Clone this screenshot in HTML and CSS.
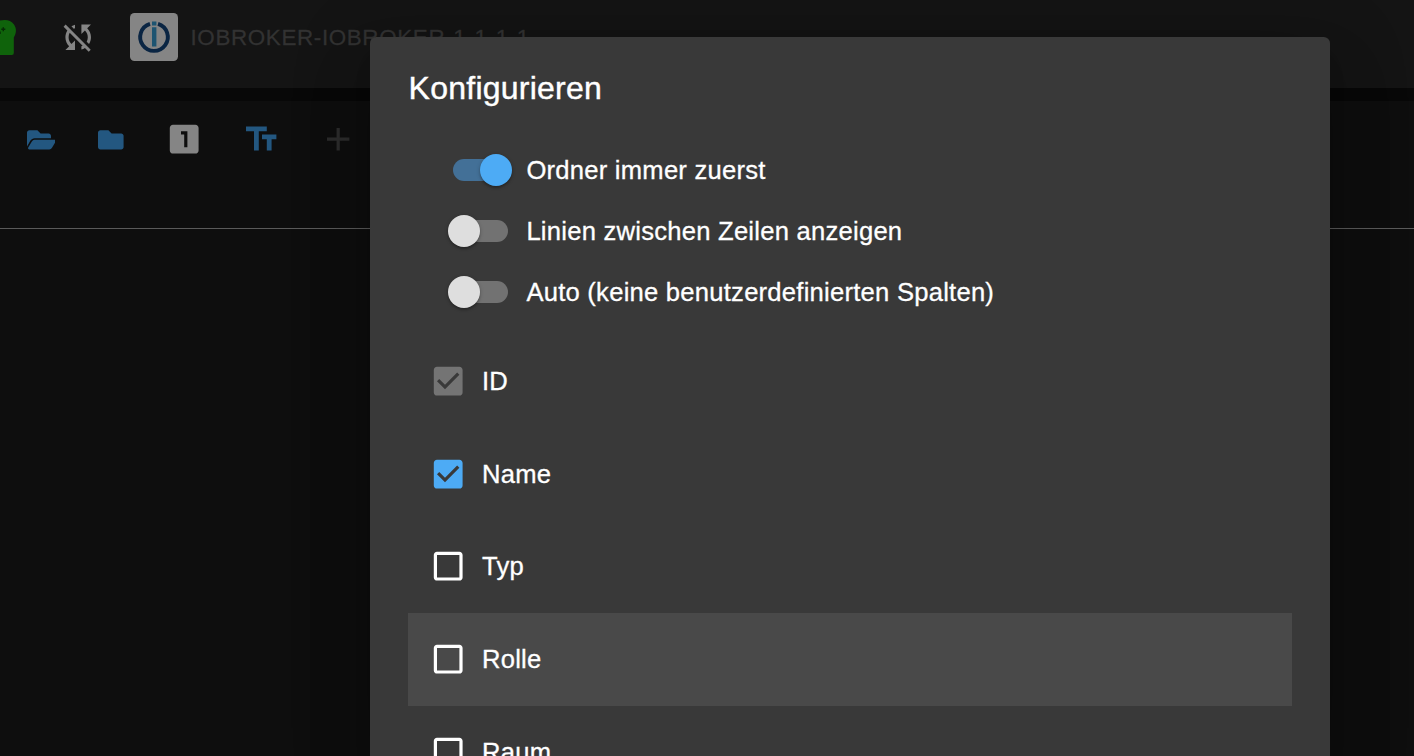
FILE: index.html
```html
<!DOCTYPE html>
<html lang="de">
<head>
<meta charset="utf-8">
<title>ioBroker</title>
<link rel="stylesheet" href="styles.css">
</head>
<body>
<header class="appbar">
  <svg class="head" viewBox="0 0 24 40"><path d="M0 1.600C5 .200 11 .800 14 5.500C17 10 16.200 14.500 13.800 18.500V34Q13.800 36 11.800 36H0Z"/><path class="spark" d="M3.300 8.300V12.300M1.300 10.300H5.300M0 12.500V15"/></svg>
  <svg class="icon sync" viewBox="0 0 24 24"><path d="M10 6.350V4.260c-.8.210-1.550.540-2.230.960l1.460 1.460c.250-.120.500-.240.770-.330zm-7.140-.940l2.360 2.360C4.450 8.990 4 10.440 4 12c0 2.210.910 4.200 2.360 5.640L4 20h6v-6l-2.240 2.240C6.680 15.150 6 13.660 6 12c0-1 .250-1.940.680-2.770l8.080 8.080c-.250.130-.500.250-.770.340v2.090c.800-.210 1.550-.540 2.230-.960l2.360 2.360 1.270-1.270L4.140 4.140 2.860 5.410zM20 4h-6v6l2.240-2.240C17.320 8.850 18 10.340 18 12c0 1-.250 1.940-.680 2.770l1.460 1.460C19.550 15.010 20 13.560 20 12c0-2.210-.910-4.200-2.360-5.640L20 4z"/></svg>
  <svg class="logo" viewBox="0 0 48 48"><rect class="logo-bg" width="48" height="48" rx="4.500"/><path class="logo-ring" d="M20 10.900A13.800 13.800 0 1 0 28 10.900"/><path class="logo-bar" d="M22 14.200h4.400V33.500H22zM22 8.500h4.400v4H22z"/></svg>
  <span class="host">IOBROKER-IOBROKER-1-1-1-1</span>
</header>
<main class="panel">
  <div class="toolbar">
    <svg class="fa-open" viewBox="0 0 576 512"><path d="M572.694 292.093L500.270 416.248A63.997 63.997 0 0 1 444.989 448H45.025c-18.523 0-30.064-20.093-20.731-36.093l72.424-124.155A64 64 0 0 1 152 256h399.964c18.523 0 30.064 20.093 20.730 36.093zM152 224h328v-48c0-26.510-21.490-48-48-48H272l-64-64H48C21.490 64 0 85.490 0 112v278.046l69.077-118.418C86.214 242.250 117.989 224 152 224z"/></svg>
    <svg class="fa-folder" viewBox="0 0 512 512"><path d="M464 128H272l-64-64H48C21.490 64 0 85.490 0 112v288c0 26.510 21.490 48 48 48h416c26.510 0 48-21.490 48-48V176c0-26.510-21.490-48-48-48z"/></svg>
    <svg class="icon one" viewBox="0 0 24 24"><path d="M19 3H5c-1.100 0-2 .900-2 2v14c0 1.100.900 2 2 2h14c1.100 0 2-.900 2-2V5c0-1.100-.900-2-2-2zm-5 14h-2V9h-2V7h4v10z"/></svg>
    <svg class="icon text" viewBox="0 0 24 24"><path d="M2.500 4v3h5v12h3V7h5V4h-13zm19 5h-9v3h3v7h3v-7h3V9z"/></svg>
    <svg class="icon add" viewBox="0 0 24 24"><path d="M19 13h-6v6h-2v-6H5v-2h6V5h2v6h6v2z"/></svg>
  </div>
</main>
<section class="dialog" role="dialog">
  <h2 class="title">Konfigurieren</h2>
  <div class="switches">
    <label class="switch-row"><span class="switch on"><span class="thumb"></span></span>Ordner immer zuerst</label>
    <label class="switch-row"><span class="switch"><span class="thumb"></span></span>Linien zwischen Zeilen anzeigen</label>
    <label class="switch-row"><span class="switch"><span class="thumb"></span></span>Auto (keine benutzerdefinierten Spalten)</label>
  </div>
  <ul class="columns">
    <li class="column"><svg class="icon disabled" viewBox="0 0 24 24"><path d="M19 3H5c-1.110 0-2 .900-2 2v14c0 1.100.890 2 2 2h14c1.110 0 2-.900 2-2V5c0-1.100-.890-2-2-2zm-9 14l-5-5 1.410-1.410L10 14.170l7.590-7.590L19 8l-9 9z"/></svg>ID</li>
    <li class="column"><svg class="icon checked" viewBox="0 0 24 24"><path d="M19 3H5c-1.110 0-2 .900-2 2v14c0 1.100.890 2 2 2h14c1.110 0 2-.900 2-2V5c0-1.100-.890-2-2-2zm-9 14l-5-5 1.410-1.410L10 14.170l7.590-7.590L19 8l-9 9z"/></svg>Name</li>
    <li class="column"><svg class="icon" viewBox="0 0 24 24"><path d="M19 5v14H5V5h14m0-2H5c-1.100 0-2 .900-2 2v14c0 1.100.900 2 2 2h14c1.100 0 2-.900 2-2V5c0-1.100-.900-2-2-2z"/></svg>Typ</li>
    <li class="column hover"><svg class="icon" viewBox="0 0 24 24"><path d="M19 5v14H5V5h14m0-2H5c-1.100 0-2 .900-2 2v14c0 1.100.900 2 2 2h14c1.100 0 2-.900 2-2V5c0-1.100-.900-2-2-2z"/></svg>Rolle</li>
    <li class="column"><svg class="icon" viewBox="0 0 24 24"><path d="M19 5v14H5V5h14m0-2H5c-1.100 0-2 .900-2 2v14c0 1.100.900 2 2 2h14c1.100 0 2-.900 2-2V5c0-1.100-.900-2-2-2z"/></svg>Raum</li>
  </ul>
</section>
</body>
</html>
```
FILE: styles.css
```css
* { box-sizing: border-box; }
html, body { height: 100%; overflow: hidden; }
body {
  margin: 0;
  position: relative;
  display: flex;
  flex-direction: column;
  gap: 13px;
  background: #080808;
  color: #fff;
  font-family: "Liberation Sans", Arial, Helvetica, sans-serif;
}
svg { display: block; flex: none; fill: currentColor; }
.icon { width: 38.4px; height: 38.4px; }

.appbar { flex: none; height: 88px; display: flex; align-items: flex-start; background: #141414; }
.head { width: 24px; height: 40px; margin-top: 19px; fill: #0f630b; }
.spark { fill: none; stroke: #062b05; stroke-width: 1.4; }
.sync { margin: 18px 0 0 35.2px; color: #858585; }
.logo { width: 48px; height: 48px; margin: 13px 0 0 32.4px; }
.logo-bg { fill: #858585; }
.logo-ring { fill: none; stroke: #0a2543; stroke-width: 3.9; }
.logo-bar { fill: #1d5471; }
.host {
  margin: 25px 0 0 12.5px;
  color: #323232;
  font-size: 22.4px;
  line-height: 26px;
  letter-spacing: 0.02857em;
  -webkit-text-stroke: .3px #323232;
}

.panel { flex: 1; background: #0e0e0e; }
.toolbar {
  height: 128px;
  display: flex;
  align-items: flex-start;
  padding: 19px 0 0 26.6px;
  border-bottom: 1px solid #5a5a5a;
  color: #235780;
}
.fa-open { width: 28.8px; height: 25.6px; margin-top: 7px; }
.fa-folder { width: 25.6px; height: 25.6px; margin: 7px 0 0 42.8px; }
.one { margin-left: 41.2px; color: #858585; }
.text { margin-left: 38.8px; }
.add { margin-left: 38.2px; color: #2c2c2c; }

.dialog {
  position: absolute;
  left: 370px;
  top: 37px;
  width: 960px;
  bottom: 0;
  overflow: hidden;
  padding: 26.4px 38px 0;
  border-radius: 6.4px 6.4px 0 0;
  background: #393939;
  box-shadow: 0 18px 24px -11px rgba(0, 0, 0, .2), 0 38px 61px 5px rgba(0, 0, 0, .14), 0 14px 74px 13px rgba(0, 0, 0, .12);
}
.title { margin: 0 0 25.2px; padding-left: .6px; font-size: 32px; font-weight: 400; line-height: 51.2px; letter-spacing: 0.0075em; -webkit-text-stroke: .4px #fff; }
.switches, .columns { font-size: 25.6px; line-height: 38.4px; letter-spacing: 0.00938em; -webkit-text-stroke: .3px #fff; }
.switch-row { height: 60.8px; display: flex; align-items: center; gap: 18.4px; padding-left: 45px; }
.switch { width: 55px; height: 22.4px; border-radius: 11.2px; display: flex; align-items: center; background: #727272; }
.thumb {
  flex: none;
  width: 32px;
  height: 32px;
  margin-left: -5px;
  border-radius: 50%;
  background: #dedede;
  box-shadow: 0 2px 2px rgba(0, 0, 0, .2), 0 1px 4px rgba(0, 0, 0, .2);
}
.switch.on { background: #437097; }
.on .thumb { margin-left: 27.2px; background: #4dabf5; }
.columns { margin: 12.4px 0 0; padding: 0; list-style: none; }
.column { height: 92.8px; display: flex; align-items: center; gap: 14.8px; padding-left: 20.8px; }
.hover { background: #494949; }
.disabled { color: #747474; }
.checked { color: #4dabf5; }
```
